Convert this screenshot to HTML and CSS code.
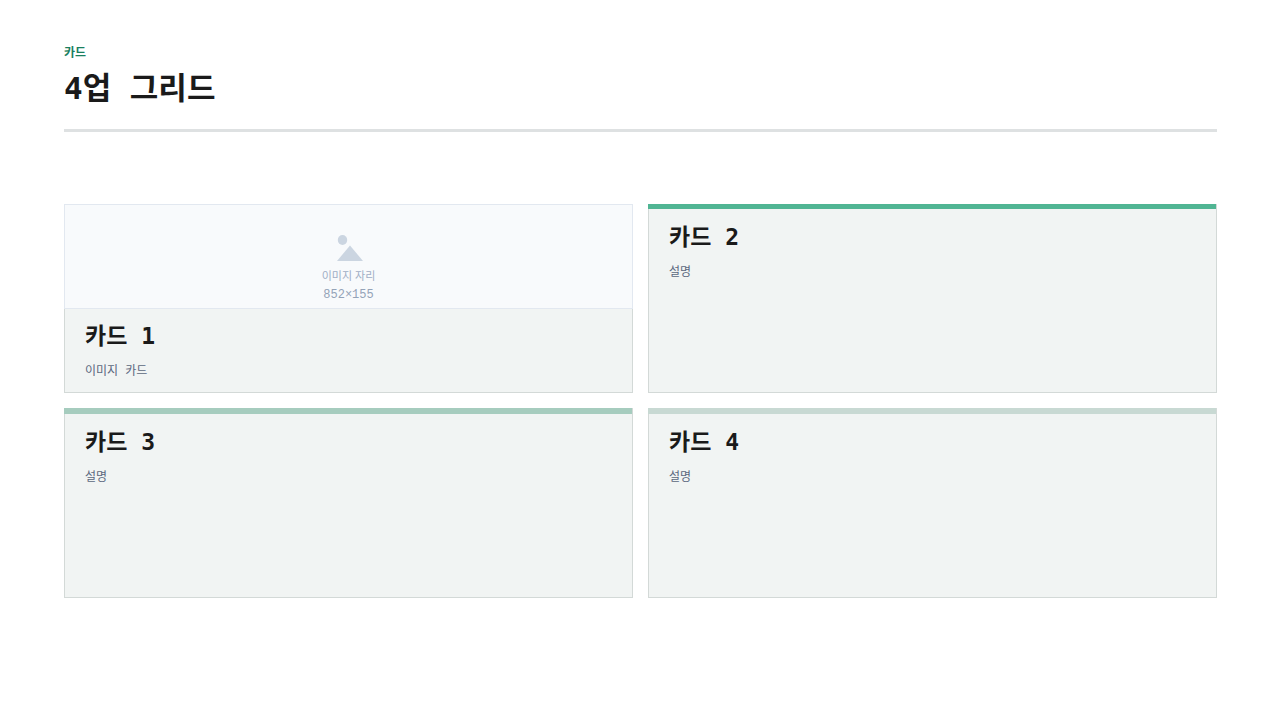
FILE: index.html
```html
<!DOCTYPE html>
<html lang="ko">
<head>
<meta charset="utf-8">
<title>4업 그리드</title>
<link rel="stylesheet" href="styles.css">
</head>
<body>
<main class="slide">
  <header class="header">
    <p class="eyebrow">카드</p>
    <h1 class="title">4업 그리드</h1>
  </header>
  <section class="grid">
    <article class="card card-media">
      <div class="placeholder">
        <svg class="picture" viewBox="0 0 28 26" aria-hidden="true"><ellipse cx="7.500" cy="5" rx="4.700" ry="5"/><path d="M2 26 15 10.500 28 26Z"/></svg>
        <span class="placeholder-label">이미지 자리</span>
        <span class="placeholder-size">852×155</span>
      </div>
      <div class="body">
        <h2 class="card-title">카드 1</h2>
        <p class="card-text">이미지 카드</p>
      </div>
    </article>
    <article class="card card-accent card-strong">
      <div class="body">
        <h2 class="card-title">카드 2</h2>
        <p class="card-text">설명</p>
      </div>
    </article>
    <article class="card card-accent card-medium">
      <div class="body">
        <h2 class="card-title">카드 3</h2>
        <p class="card-text">설명</p>
      </div>
    </article>
    <article class="card card-accent card-soft">
      <div class="body">
        <h2 class="card-title">카드 4</h2>
        <p class="card-text">설명</p>
      </div>
    </article>
  </section>
</main>
</body>
</html>
```
FILE: styles.css
```css
* {
  box-sizing: border-box;
}

body {
  margin: 0;
  background: #fff;
  color: #1a1a1a;
  font-family: "Liberation Mono", "Noto Sans CJK KR", monospace;
}

h1,
h2,
p {
  margin: 0;
}

.slide {
  padding: 46px 63px 44px 64px;
}

.header {
  padding-bottom: 20px;
  border-bottom: 3px solid #dee1e2;
}

.eyebrow {
  color: #1a7f5e;
  font-size: 12px;
  font-weight: 700;
  line-height: 16px;
}

.title,
.card-title {
  font-family: "DejaVu Sans Mono", "Noto Sans CJK KR", monospace;
  font-weight: 700;
}

.title {
  margin-top: 6px;
  font-size: 31px;
  line-height: 41px;
}

.grid {
  display: grid;
  grid-template-columns: 1fr 1fr;
  grid-template-rows: minmax(189px, auto) minmax(190px, auto);
  gap: 15px;
  margin-top: 72px;
}

.card {
  border: 1px solid #d3d9d7;
  border-top: 0;
  background: #f1f4f3;
}

.card-accent::before {
  content: "";
  display: block;
  height: 6px;
  margin-left: -1px;
}

.card-strong::before {
  height: 5px;
  background: #50b593;
}

.card-medium::before {
  background: #a6ccbe;
}

.card-soft::before {
  background: #c8d9d3;
}

.placeholder {
  display: flex;
  flex-direction: column;
  align-items: center;
  margin: 0 -1px;
  padding: 30px 0 4px;
  border: 1px solid #e2e8f0;
  background: #f8fafc;
  color: #a0aec5;
  font-size: 11px;
  line-height: 18px;
}

.picture {
  width: 28px;
  height: 26px;
  margin-bottom: 5px;
  fill: #cbd5e1;
}

.placeholder-label {
  margin-bottom: 2px;
  font-family: "Noto Sans CJK KR", sans-serif;
}

.placeholder-size {
  color: #94a3b8;
  font-size: 12px;
}

.body {
  padding: 12px 20px 10px;
}

.card-media .body {
  padding-top: 11px;
}

.card-title {
  font-size: 23px;
  line-height: 32px;
}

.card-text {
  margin-top: 11px;
  color: #5b6880;
  font-size: 12px;
  line-height: 18px;
}
```
